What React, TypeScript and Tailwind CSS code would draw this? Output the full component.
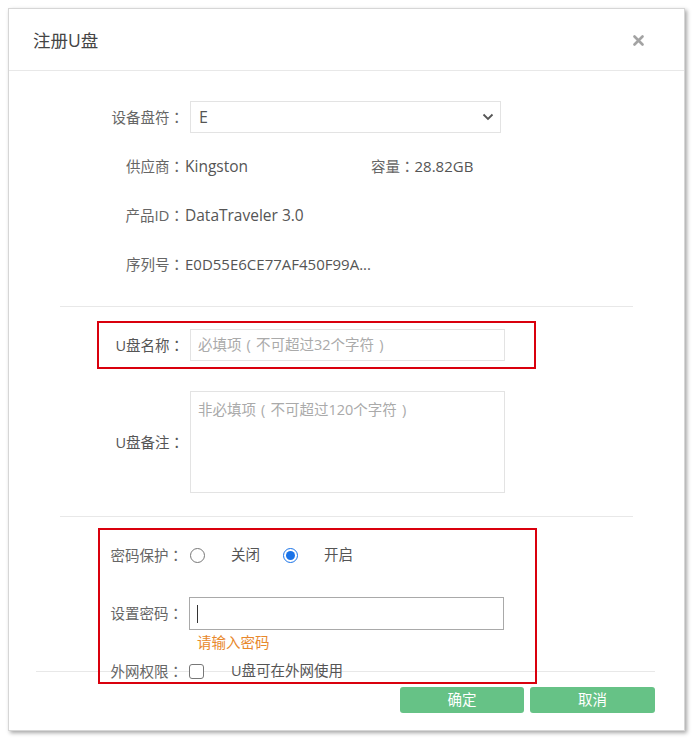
import React from "react";

const font = { fontFamily: '"Open Sans", "Noto Sans CJK SC", sans-serif' };
const jp = { fontFamily: '"Noto Sans CJK JP", sans-serif' };

function C() {
  return <span style={jp}>：</span>;
}
function L() {
  return <span className="inline-block w-[1em] text-center">(</span>;
}
function R() {
  return <span className="inline-block w-[1em] text-center">)</span>;
}

export default function App() {
  return (
    <div className="w-[693px] h-[739px] bg-white overflow-hidden" style={font}>
      <div className="ml-2 mt-2 w-[677px] h-[723px] bg-white border border-[#d6d6d6] shadow-[2px_2px_4px_rgba(0,0,0,0.35)] flex flex-col">
        {/* header */}
        <div className="h-[62px] shrink-0 border-b border-[#e8e8e8] flex items-center justify-between pl-[24px] pr-[40px]">
          <span className="text-[17.5px] leading-6 text-[#444]">注册U盘</span>
          <svg width="11" height="11" viewBox="0 0 11 11" className="mt-[1px]">
            <path d="M1.5 1.5 L9.5 9.5 M9.5 1.5 L1.5 9.5" stroke="#a3a3a3" strokeWidth="2.6" strokeLinecap="round" />
          </svg>
        </div>

        {/* body */}
        <div className="mx-[51px] flex flex-col text-[14.5px] leading-5 text-[#666]">
          {/* section 1 */}
          <div className="pt-[30px] pb-[26px] border-b border-[#e8e8e8] flex flex-col gap-[17px]">
            <div className="h-8 flex items-center">
              <div className="w-[124px] text-right">设备盘符<C /></div>
              <div className="ml-[6px] w-[311px] h-8 border border-[#e3e3e3] flex items-center justify-between pl-[8px] pr-[6px]">
                <span className="text-[16px] text-[#555]">E</span>
                <svg width="12" height="8" viewBox="0 0 12 8">
                  <path d="M1.5 1.5 L6 6 L10.5 1.5" stroke="#555" strokeWidth="1.8" fill="none" />
                </svg>
              </div>
            </div>
            <div className="h-8 flex items-center">
              <div className="w-[124px] text-right">供应商<C /></div>
              <div className="ml-[1px] w-[186px] text-[#555] text-[15.5px]">Kingston</div>
              <div>容量<C /><span className="text-[#555] text-[15px]">28.82GB</span></div>
            </div>
            <div className="h-8 flex items-center">
              <div className="w-[124px] text-right">产品<span className="text-[15px]">ID</span><C /></div>
              <div className="ml-[1px] text-[#555] text-[15.5px]">DataTraveler 3.0</div>
            </div>
            <div className="h-8 flex items-center">
              <div className="w-[124px] text-right">序列号<C /></div>
              <div className="ml-[1px] text-[#555] text-[15px]">E0D55E6CE77AF450F99A...</div>
            </div>
          </div>

          {/* section 2 */}
          <div className="pt-[14px] pb-[23px] border-b border-[#e8e8e8] flex flex-col">
            <div className="ml-[37px] w-[439px] h-[48px] border-2 border-[#d9000d] flex items-center">
              <div className="w-[85px] text-right text-[#555]">U盘名称<C /></div>
              <div className="ml-[6px] w-[315px] h-8 border border-[#e3e3e3] flex items-center pl-[7px] text-[#aaa]">
                <span>必填项<L />不可超过32个字符<R /></span>
              </div>
            </div>
            <div className="mt-[22px] flex items-center">
              <div className="w-[124px] text-right text-[#555]">U盘备注<C /></div>
              <div className="ml-[6px] w-[315px] h-[102px] border border-[#e3e3e3] pl-[7px] pt-[8px] text-[#aaa]">
                非必填项<L />不可超过120个字符<R />
              </div>
            </div>
          </div>

          {/* section 3 */}
          <div className="pt-[11px] relative z-10">
            <div className="ml-[38px] w-[439px] h-[156px] border-2 border-[#d9000d] flex flex-col pt-[9px]">
              <div className="h-8 flex items-center">
                <div className="w-[83px] text-right">密码保护<C /></div>
                <div className="ml-[7px] w-[15px] h-[15px] rounded-full border border-[#777] bg-white" />
                <span className="ml-[26px] text-[#555]">关闭</span>
                <div className="ml-[23px] w-[15px] h-[15px] rounded-full border border-[#1a73e8] bg-white flex items-center justify-center">
                  <div className="w-[9px] h-[9px] rounded-full bg-[#1a73e8]" />
                </div>
                <span className="ml-[26px] text-[#555]">开启</span>
              </div>
              <div className="mt-[26px] flex items-center">
                <div className="w-[83px] text-right">设置密码<C /></div>
                <div className="ml-[6px] w-[315px] h-[33px] border border-[#a9a9a9] flex items-center pl-[7px]">
                  <div className="w-[1px] h-[18px] bg-[#333]" />
                </div>
              </div>
              <div className="mt-[3px] ml-[97px] text-[#e8882c]">请输入密码</div>
              <div className="mt-[8px] h-5 flex items-center">
                <div className="w-[83px] text-right">外网权限<C /></div>
                <div className="ml-[6px] w-[15px] h-[15px] rounded-[3px] border border-[#777] bg-white" />
                <span className="ml-[27px] text-[#555]">U盘可在外网使用</span>
              </div>
            </div>
          </div>
        </div>

        {/* footer */}
        <div className="mt-[-13px] ml-[27px] mr-[29px] border-t border-[#e8e8e8] pt-[15px] flex justify-end gap-[6px]">
          <button className="w-[124px] h-[26px] rounded-[3px] bg-[#66c286] text-white text-[14.5px] leading-5" style={font}>确定</button>
          <button className="w-[125px] h-[26px] rounded-[3px] bg-[#66c286] text-white text-[14.5px] leading-5" style={font}>取消</button>
        </div>
      </div>
    </div>
  );
}
